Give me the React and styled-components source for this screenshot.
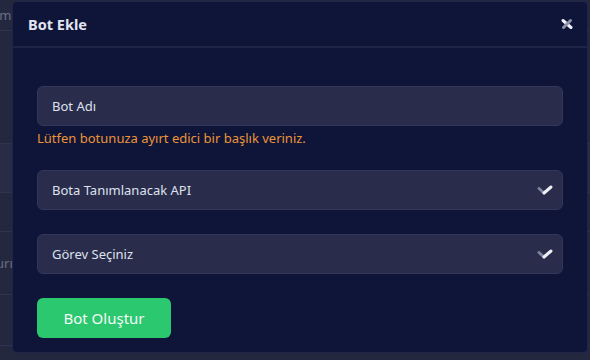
import React from 'react';
import styled, { createGlobalStyle } from 'styled-components';

const GlobalStyle = createGlobalStyle`
  html, body { margin: 0; padding: 0; }
  body {
    background: #24283f;
    font-family: "Noto Sans", "Open Sans", sans-serif;
    overflow: hidden;
  }
`;

const Page = styled.div`
  position: relative;
  width: 590px;
  height: 360px;
  background: #24283f;
  overflow: hidden;
`;

const BackTable = styled.div`
  display: flex;
  flex-direction: column;
`;

const BackRow = styled.div`
  height: ${(p) => p.h}px;
  border-bottom: 1px solid #2f3350;
  background: ${(p) => (p.shade ? '#282c45' : 'transparent')};
  color: #6a6e8a;
  font-size: 13px;
  display: flex;
  align-items: center;
  text-indent: -4px;
`;

const Modal = styled.div`
  position: absolute;
  left: 12px;
  top: 1px;
  width: 574px;
  height: 350px;
  background: #0f1538;
  border: 1px solid #1f2548;
  border-radius: 5px;
  display: flex;
  flex-direction: column;
`;

const Header = styled.div`
  height: 44px;
  border-bottom: 2px solid #1d2446;
  display: flex;
  align-items: center;
  justify-content: space-between;
  padding: 0 14px 0 15px;
`;

const Title = styled.h3`
  margin: 0;
  font-size: 14.5px;
  font-weight: 700;
  color: #e3e5f2;
`;

const CloseButton = styled.button`
  background: none;
  border: none;
  padding: 0;
  width: 12px;
  height: 12px;
  display: flex;
  align-items: center;
  justify-content: center;
  cursor: pointer;
`;

const Body = styled.div`
  padding: 38px 24px 0 24px;
  display: flex;
  flex-direction: column;
`;

const Field = styled.div`
  position: relative;
  height: 40px;
  box-sizing: border-box;
  background: #292d4b;
  border: 1px solid #32365a;
  border-radius: 6px;
  display: flex;
  align-items: center;
  padding: 0 14px;
  font-size: 13px;
  color: #dfe1ee;
  margin-top: ${(p) => p.mt || 0}px;
`;

const Chevron = styled.span`
  position: absolute;
  right: 8px;
  top: 13px;
  display: flex;
`;

const Hint = styled.div`
  margin-top: 3px;
  font-size: 13px;
  color: #eb9438;
`;

const SubmitButton = styled.button`
  margin-top: 24px;
  width: 134px;
  height: 40px;
  background: #2bc86f;
  border: none;
  border-radius: 6px;
  color: #f4fbf7;
  font-family: inherit;
  font-size: 15px;
  cursor: pointer;
`;

const ChevronIcon = () => (
  <svg width="18" height="12" viewBox="0 0 18 12">
    <path d="M3 4.5 L8 9" stroke="#80839c" strokeWidth="3" strokeLinecap="round" />
    <path d="M8 9 L15 3" stroke="#eef0f8" strokeWidth="3" strokeLinecap="round" />
  </svg>
);

const CloseIcon = () => (
  <svg width="12" height="12" viewBox="0 0 12 12">
    <path d="M2 2.5 L10 9.5" stroke="#f2f3fa" strokeWidth="3" strokeLinecap="round" />
    <path d="M9.5 2.5 L2.5 9.5" stroke="#8f92ab" strokeWidth="3" strokeLinecap="round" />
  </svg>
);

export default function App() {
  return (
    <Page>
      <GlobalStyle />
      <BackTable>
        <BackRow h={30}>ım</BackRow>
        <BackRow h={112} />
        <BackRow h={48} shade />
        <BackRow h={38} />
        <BackRow h={62}>urı</BackRow>
        <BackRow h={50} />
      </BackTable>
      <Modal>
        <Header>
          <Title>Bot Ekle</Title>
          <CloseButton>
            <CloseIcon />
          </CloseButton>
        </Header>
        <Body>
          <Field>Bot Adı</Field>
          <Hint>Lütfen botunuza ayırt edici bir başlık veriniz.</Hint>
          <Field mt={23}>
            Bota Tanımlanacak API
            <Chevron><ChevronIcon /></Chevron>
          </Field>
          <Field mt={24}>
            Görev Seçiniz
            <Chevron><ChevronIcon /></Chevron>
          </Field>
          <SubmitButton>Bot Oluştur</SubmitButton>
        </Body>
      </Modal>
    </Page>
  );
}
